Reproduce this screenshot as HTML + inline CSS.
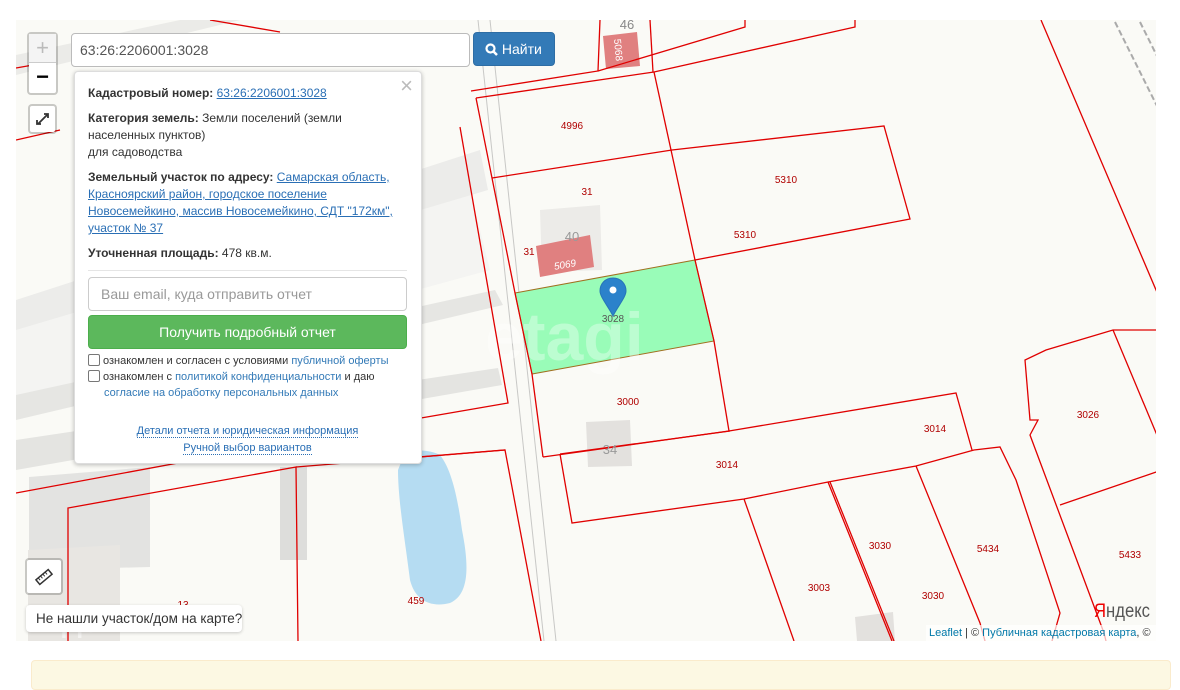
<!DOCTYPE html>
<html><head><meta charset="utf-8"><style>
*{box-sizing:border-box;margin:0;padding:0}
body{width:1180px;height:679px;background:#fff;position:relative;overflow:hidden;font-family:"Liberation Sans",Arial,sans-serif;}
#map{position:absolute;left:16px;top:20px;width:1140px;height:621px;background:#fafaf6;overflow:hidden}
#map svg{position:absolute;left:0;top:0}
.ctl{position:absolute;background:#fff;border:2px solid rgba(0,0,0,0.2);border-radius:4px;background-clip:padding-box}
.pop{position:absolute;left:74px;top:71px;width:348px;height:393px;background:#fff;border:1px solid #ddd;border-radius:4px;box-shadow:0 1px 4px rgba(0,0,0,.25);font-size:12px;color:#333;padding:13px 14px 0 13px;line-height:17px}
.pop b{font-weight:bold;color:#333}
.pop a{color:#2a6fb5;text-decoration:underline}
.pop p{margin-bottom:8px}
.lk{color:#337ab7}
</style></head><body>
<div id="map">
<svg width="1140" height="621" viewBox="16 20 1140 621" xmlns="http://www.w3.org/2000/svg">
 <polygon points="16,55 180,20 240,20 16,75" fill="#ebebe8"/>
 <polygon points="16,320 470,190 490,270 16,400" fill="#f4f4f2"/>
 <polygon points="16,300 480,150 488,190 16,330" fill="#ececea"/>
 <polygon points="16,395 495,290 503,305 16,420" fill="#e6e6e3"/>
 <polygon points="16,440 498,368 502,385 16,470" fill="#e4e4e1"/>
 <polygon points="29,477 150,467 150,567 29,570" fill="#e3e3e1"/>
 <polygon points="28,550 120,545 120,641 28,641" fill="#e8e6e2"/>
 <polygon points="280,467 307,467 307,560 280,560" fill="#dddddb"/>
 <polygon points="540,210 600,205 602,270 542,272" fill="#ecebe8"/>
 <polygon points="586,422 630,420 632,466 588,467" fill="#e3e1de"/>
 <polygon points="855,617 893,612 895,641 857,641" fill="#e3e1de"/>
 <line x1="478" y1="20" x2="544" y2="641" stroke="#c8c8c6" stroke-width="1"/>
 <line x1="490" y1="20" x2="556" y2="641" stroke="#c8c8c6" stroke-width="1"/>
 <line x1="1115" y1="22" x2="1159" y2="110" stroke="#aaa" stroke-width="2" stroke-dasharray="6,3"/>
 <line x1="1140" y1="22" x2="1159" y2="60" stroke="#aaa" stroke-width="2" stroke-dasharray="6,3"/>
 <path d="M404,455 C415,448 430,450 440,455 C452,470 458,500 462,530 C470,570 468,595 450,603 C430,608 415,600 410,580 C405,540 398,500 398,470 Z" fill="#b5dcf2"/>
 <polygon points="603,36 637,32 640,66 606,69" fill="#e08080"/>
 <polygon points="536,246 590,235 594,267 540,277" fill="#e08080"/>
 <polygon points="515,293 695,260 714,341 532,374" fill="#99fcb8" stroke="#a07020" stroke-width="1"/>
 <text x="485" y="360" font-size="68" font-weight="bold" fill="#ffffff" fill-opacity="0.35" font-family="Liberation Sans">etagi</text>
 <g fill="none" stroke="#e00000" stroke-width="1.3">
  <polyline points="471,91 598,71 600,20"/>
  <polyline points="598,71 745,27 745,20"/>
  <polyline points="650,20 653,72"/>
  <polyline points="476,98 654,72 855,27 855,20"/>
  <polyline points="654,72 695,260"/>
  <polyline points="476,98 492,178 515,293 532,374 543,457"/>
  <polyline points="492,178 672,150 884,126 910,219 695,260 714,341"/>
  <polyline points="714,341 729,431"/>
  <polyline points="543,457 729,431 956,393 972,450"/>
  <polyline points="560,454 730,431"/>
  <polyline points="560,454 572,523 744,499 828,482 916,466 974,450 1000,447 1016,480 1060,613 1052,641"/>
  <polyline points="744,499 794,641"/>
  <polyline points="828,482 892,641"/>
  <polyline points="830,482 894,641"/>
  <polyline points="916,466 980,623 985,641"/>
  <polyline points="1041,20 1159,297"/>
  <polyline points="1159,330 1113,330 1046,350 1025,360 1030,420 1038,420 1030,435 1104,633 1106,641"/>
  <polyline points="1113,330 1159,440"/>
  <polyline points="1060,505 1162,470"/>
  <polyline points="460,127 508,403 421,418 16,493"/>
  <polyline points="16,140 60,130"/>
  <polyline points="68,641 68,508 296,467 298,641"/>
  <polyline points="296,467 505,450 541,641"/>
  <polyline points="420,457 505,450"/>
  <polyline points="16,68 50,62"/>
  <polyline points="210,20 280,32"/>
 </g>
 <g font-family="Liberation Sans" font-size="10" fill="#b00000" text-anchor="middle">
  <text x="572" y="129">4996</text><text x="587" y="195">31</text>
  <text x="786" y="183">5310</text><text x="745" y="238">5310</text>
  <text x="529" y="255">31</text><text x="613" y="322" fill="#555">3028</text>
  <text x="628" y="405">3000</text><text x="935" y="432">3014</text>
  <text x="727" y="468">3014</text><text x="1088" y="418">3026</text>
  <text x="880" y="549">3030</text><text x="988" y="552">5434</text>
  <text x="1130" y="558">5433</text><text x="819" y="591">3003</text>
  <text x="933" y="599">3030</text><text x="416" y="604">459</text>
  <text x="183" y="608">13</text>
 </g>
 <text x="572" y="241" font-size="13" fill="#999" text-anchor="middle" font-family="Liberation Sans">40</text>
 <text x="627" y="29" font-size="13" fill="#888" text-anchor="middle" font-family="Liberation Sans">46</text>
 <text x="610" y="454" font-size="13" fill="#999" text-anchor="middle" font-family="Liberation Sans">34</text>
 <text x="565" y="268" font-size="10" fill="#fff" font-style="italic" text-anchor="middle" font-family="Liberation Sans" transform="rotate(-10 565 265)">5069</text>
 <text x="617" y="52" font-size="10" fill="#fff" text-anchor="middle" font-family="Liberation Sans" transform="rotate(85 617 50)">5068</text>
 <path d="M613,278 C605,278 600,284 600,291 C600,297 608,306 613,316 C618,306 626,297 626,291 C626,284 621,278 613,278 Z" fill="#2b82cb" stroke="#2675b8"/>
 <circle cx="613" cy="290" r="3.5" fill="#fff"/>
 <text x="1122" y="617" font-size="19" fill="#555" text-anchor="middle" font-family="Liberation Sans" textLength="56" lengthAdjust="spacingAndGlyphs"><tspan fill="#e00">Я</tspan>ндекс</text>
 <text x="62" y="632" font-size="28" fill="#fff" fill-opacity="0.5" font-family="Liberation Sans" font-weight="bold">   Домклик</text>
</svg>
</div>

<div class="ctl" style="left:27px;top:32px;width:31px;height:63px">
 <div style="height:29px;border-bottom:1px solid #ccc;text-align:center;font-size:22px;line-height:28px;color:#bbb;background:#f4f4f4">+</div>
 <div style="height:30px;text-align:center;font-size:22px;line-height:28px;color:#000;font-weight:bold">−</div>
</div>
<div class="ctl" style="left:28px;top:104px;width:29px;height:30px;text-align:center">
 <svg width="25" height="26" viewBox="0 0 25 26"><path d="M8,18 L17,9 M14,8 H18 V12 M7,14 V18 H11" stroke="#333" stroke-width="1.8" fill="none"/></svg>
</div>
<div class="ctl" style="left:25px;top:558px;width:38px;height:37px;text-align:center">
 <svg width="34" height="33" viewBox="0 0 34 33"><g transform="rotate(-40 17 17)"><rect x="9" y="14" width="16" height="6" fill="none" stroke="#333" stroke-width="1.5"/><path d="M12,14v3M15,14v3M18,14v3M21,14v3" stroke="#333"/></g></svg>
</div>
<div style="position:absolute;left:26px;top:605px;width:216px;height:27px;background:#fff;border-radius:4px;box-shadow:0 1px 3px rgba(0,0,0,.2);font-size:13.5px;line-height:27px;padding-left:10px;color:#333;white-space:nowrap;overflow:hidden">Не нашли участок/дом на карте?</div>

<div style="position:absolute;left:71px;top:33px;width:399px;height:34px;background:#fff;border:1px solid #bbb;border-radius:4px;font-size:14px;line-height:32px;padding-left:8px;color:#555">63:26:2206001:3028</div>
<div style="position:absolute;left:473px;top:32px;width:82px;height:34px;background:#337ab7;border:1px solid #2e6da4;border-radius:4px;color:#fff;font-size:14px;line-height:32px;padding-left:11px"><svg width="13" height="13" viewBox="0 0 13 13" style="vertical-align:-2px"><circle cx="5.5" cy="5.5" r="4" stroke="#fff" stroke-width="2.2" fill="none"/><path d="M8.5,8.5 L12,12" stroke="#fff" stroke-width="2.5"/></svg> Найти</div>

<div class="pop">
 <div style="position:absolute;right:8px;top:3px;font-size:22px;color:#bbb;line-height:22px">×</div>
 <p><b>Кадастровый номер:</b> <a>63:26:2206001:3028</a></p>
 <p><b>Категория земель:</b> Земли поселений (земли населенных пунктов)<br>для садоводства</p>
 <p><b>Земельный участок по адресу:</b> <a>Самарская область, Красноярский район, городское поселение Новосемейкино, массив Новосемейкино, СДТ "172км", участок № 37</a></p>
 <p style="margin-bottom:8px"><b>Уточненная площадь:</b> 478 кв.м.</p>
 <div style="border-top:1px solid #e5e5e5;margin:0 0 6px 0"></div>
 <div style="height:34px;border:1px solid #ccc;border-radius:4px;font-size:14px;line-height:32px;padding-left:12px;color:#999">Ваш email, куда отправить отчет</div>
 <div style="height:34px;margin-top:4px;background:#5cb85c;border:1px solid #4cae4c;border-radius:4px;font-size:14px;line-height:32px;text-align:center;color:#fff">Получить подробный отчет</div>
 <div style="font-size:11px;line-height:16px;margin-top:4px;color:#333">
  <div><span style="display:inline-block;width:12px;height:12px;border:1px solid #777;border-radius:2px;vertical-align:-2px;margin-right:3px"></span>ознакомлен и согласен с условиями <span class="lk">публичной оферты</span></div>
  <div><span style="display:inline-block;width:12px;height:12px;border:1px solid #777;border-radius:2px;vertical-align:-2px;margin-right:3px"></span>ознакомлен с <span class="lk">политикой конфиденциальности</span> и даю</div>
  <div style="padding-left:16px" class="lk">согласие на обработку персональных данных</div>
 </div>
 <div style="text-align:center;font-size:11px;line-height:17px;margin-top:22px;color:#2a6fb5">
  <span style="border-bottom:1px dotted #2a6fb5">Детали отчета и юридическая информация</span><br>
  <span style="border-bottom:1px dotted #2a6fb5">Ручной выбор вариантов</span>
 </div>
</div>

<div style="position:absolute;left:926px;top:625px;width:230px;height:16px;background:rgba(255,255,255,.7);font-size:11px;line-height:16px;color:#333;padding-left:3px;white-space:nowrap"><span style="color:#0078a8">Leaflet</span> | © <span style="color:#0078a8">Публичная кадастровая карта</span>, ©</div>

<div style="position:absolute;left:31px;top:660px;width:1140px;height:30px;background:#fcf8e3;border:1px solid #faebcc;border-radius:4px"></div>
</body></html>
